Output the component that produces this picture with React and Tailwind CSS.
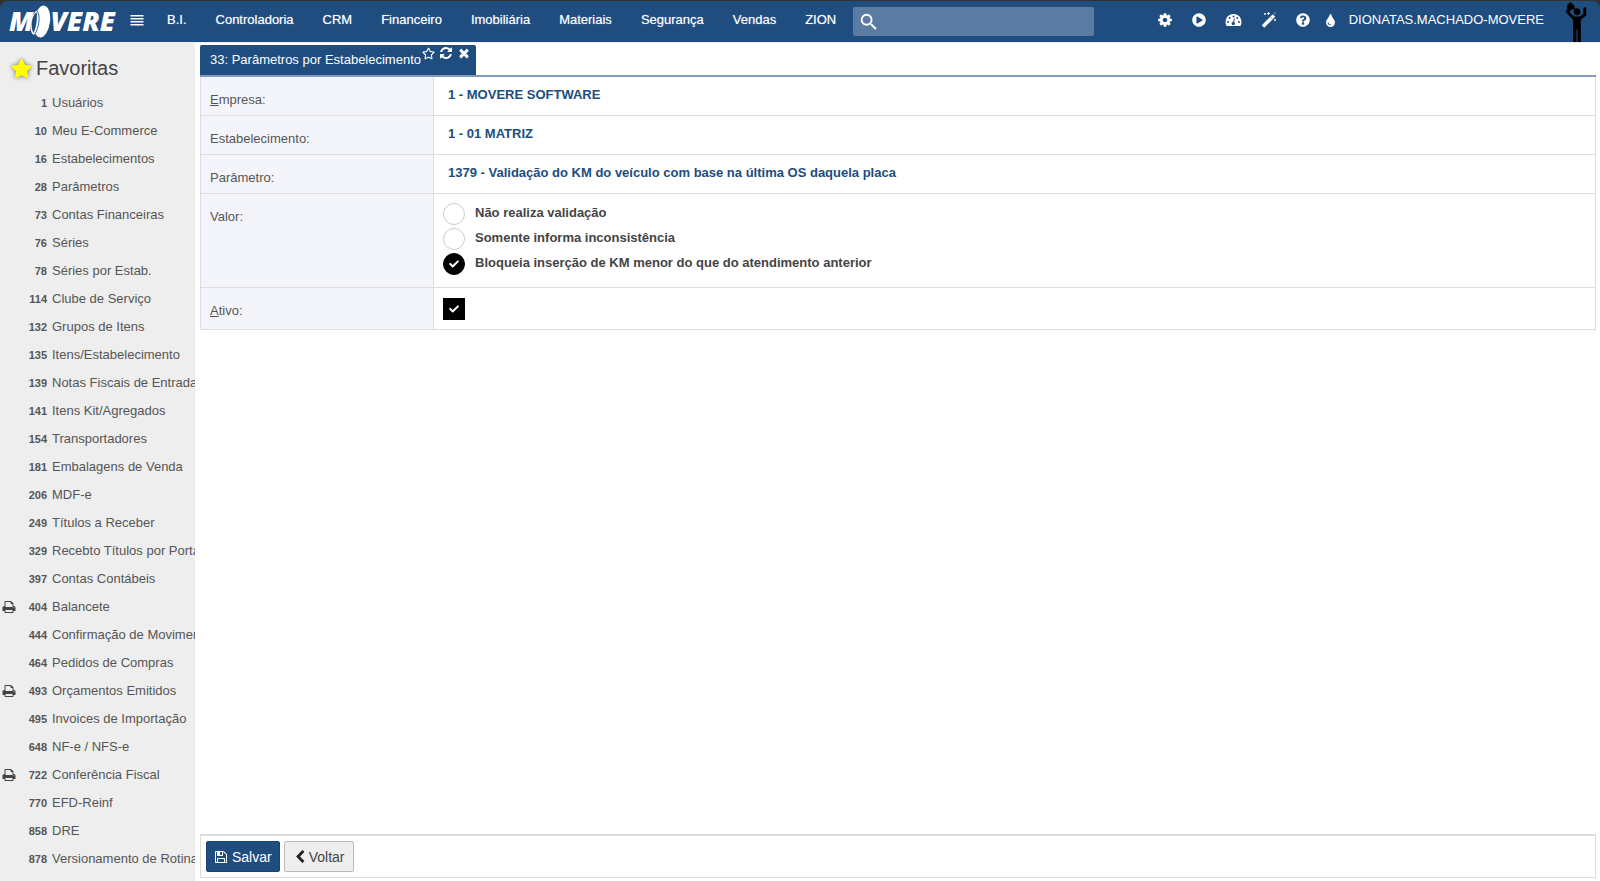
import React from 'react';
import { FaPlayCircle, FaQuestionCircle, FaTint, FaRegStar, FaStar, FaCheck } from 'react-icons/fa';
import { MdSearch } from 'react-icons/md';

const MENUS = ['B.I.', 'Controladoria', 'CRM', 'Financeiro', 'Imobiliária', 'Materiais', 'Segurança', 'Vendas', 'ZION'];

const FAVORITES = [
  { id: 1, name: 'Usuários' },
  { id: 10, name: 'Meu E-Commerce' },
  { id: 16, name: 'Estabelecimentos' },
  { id: 28, name: 'Parâmetros' },
  { id: 73, name: 'Contas Financeiras' },
  { id: 76, name: 'Séries' },
  { id: 78, name: 'Séries por Estab.' },
  { id: 114, name: 'Clube de Serviço' },
  { id: 132, name: 'Grupos de Itens' },
  { id: 135, name: 'Itens/Estabelecimento' },
  { id: 139, name: 'Notas Fiscais de Entrada' },
  { id: 141, name: 'Itens Kit/Agregados' },
  { id: 154, name: 'Transportadores' },
  { id: 181, name: 'Embalagens de Venda' },
  { id: 206, name: 'MDF-e' },
  { id: 249, name: 'Títulos a Receber' },
  { id: 329, name: 'Recebto Títulos por Portador' },
  { id: 397, name: 'Contas Contábeis' },
  { id: 404, name: 'Balancete', print: true },
  { id: 444, name: 'Confirmação de Movimento' },
  { id: 464, name: 'Pedidos de Compras' },
  { id: 493, name: 'Orçamentos Emitidos', print: true },
  { id: 495, name: 'Invoices de Importação' },
  { id: 648, name: 'NF-e / NFS-e' },
  { id: 722, name: 'Conferência Fiscal', print: true },
  { id: 770, name: 'EFD-Reinf' },
  { id: 858, name: 'DRE' },
  { id: 878, name: 'Versionamento de Rotinas' },
];

const OPTIONS = [
  'Não realiza validação',
  'Somente informa inconsistência',
  'Bloqueia inserção de KM menor do que do atendimento anterior',
];

const ICONS = {
  bars: 'M64 256h1664v192H64zM64 640h1664v192H64zM64 1024h1664v192H64zM64 1408h1664v192H64z',
  print: 'M448 1536h896v-256h-896v256zm0-640h896v-384h-160q-40 0-68-28t-28-68v-160h-640v640zm1152 64q0-26-19-45t-45-19-45 19-19 45 19 45 45 19 45-19 19-45zm128 0v416q0 13-9.500 22.500t-22.500 9.500h-224v160q0 40-28 68t-68 28h-960q-40 0-68-28t-28-68v-160h-224q-13 0-22.500-9.500t-9.500-22.500v-416q0-79 56.500-135.500t135.500-56.500h64v-544q0-40 28-68t68-28h672q40 0 88 20t76 48l152 152q28 28 48 76t20 88v256h64q79 0 135.500 56.500t56.500 135.500z',
  refresh: 'M1639 1056q0 5-1 7-64 268-268 434.500t-478 166.500q-146 0-282.500-55t-243.500-157l-129 129q-19 19-45 19t-45-19-19-45v-448q0-26 19-45t45-19h448q26 0 45 19t19 45-19 45l-137 137q71 66 161 102t187 36q134 0 250-65t186-179q11-17 53-117 8-23 30-23h192q13 0 22.500 9.500t9.500 22.500zm25-800v448q0 26-19 45t-45 19h-448q-26 0-45-19t-19-45 19-45l138-138q-148-137-349-137-134 0-250 65t-186 179q-11 17-53 117-8 23-30 23h-199q-13 0-22.500-9.500t-9.500-22.500v-7q65-268 270-434.500t480-166.500q146 0 284 55.500t245 156.500l130-129q19-19 45-19t45 19 19 45z',
  times: 'M1490 1322q0 40-28 68l-136 136q-28 28-68 28t-68-28l-294-294-294 294q-28 28-68 28t-68-28l-136-136q-28-28-28-68t28-68l294-294-294-294q-28-28-28-68t28-68l136-136q28-28 68-28t68 28l294 294 294-294q28-28 68-28t68 28l136 136q28 28 28 68t-28 68l-294 294 294 294q28 28 28 68z',
  left: 'M1427 301l-531 531 531 531q19 19 19 45t-19 45l-166 166q-19 19-45 19t-45-19l-742-742q-19-19-19-45t19-45l742-742q19-19 45-19t45 19l166 166q19 19 19 45t-19 45z',
  save: 'M512 1536h768v-384h-768v384zm896 0h128v-896q0-14-10-38.500t-20-34.500l-281-281q-10-10-34-20t-39-10v416q0 40-28 68t-68 28h-576q-40 0-68-28t-28-68v-416h-128v1280h128v-416q0-40 28-68t68-28h832q40 0 68 28t28 68v416zm-384-928v-320q0-13-9.500-22.500t-22.500-9.500h-192q-13 0-22.500 9.500t-9.500 22.500v320q0 13 9.500 22.500t22.500 9.500h192q13 0 22.500-9.500t9.500-22.500zm640 32v928q0 40-28 68t-68 28h-1344q-40 0-68-28t-28-68v-1344q0-40 28-68t68-28h928q40 0 88 20t76 48l280 280q28 28 48 76t20 88z',
  cog: 'M1152 896q0-106-75-181t-181-75-181 75-75 181 75 181 181 75 181-75 75-181zm512-109v222q0 12-8 23t-20 13l-185 28q-19 54-39 91 35 50 107 138 10 12 10 25t-9 23q-27 37-99 108t-94 71q-12 0-26-9l-138-108q-44 23-91 38-16 136-29 186-7 28-36 28h-222q-14 0-24.500-8.500t-11.500-21.500l-28-184q-49-16-90-37l-141 107q-10 9-25 9-14 0-25-11-126-114-165-168-7-10-7-23 0-12 8-23 15-21 51-66.500t54-70.500q-27-50-41-99l-183-27q-13-2-21-12.500t-8-23.500v-222q0-12 8-23t19-13l186-28q14-46 39-92-40-57-107-138-10-12-10-24 0-10 9-23 26-36 98.500-107.500t94.500-71.500q13 0 26 10l138 107q44-23 91-38 16-136 29-186 7-28 36-28h222q14 0 24.500 8.500t11.500 21.500l28 184q49 16 90 37l142-107q9-9 24-9 13 0 25 10 129 119 165 170 7 8 7 22 0 12-8 23-15 21-51 66.500t-54 70.500q26 50 41 98l183 28q13 2 21 12.500t8 23.500z',
};

const Icon = ({ name, className }) => (
  <svg viewBox="0 0 1792 1792" fill="currentColor" className={className}><path d={ICONS[name]} /></svg>
);

const Gauge = () => (
  <svg viewBox="0 0 17 14" className="h-[14px] w-[17px]">
    <path d="M8.500 1A8 8 0 0 0 1.600 13h13.800A8 8 0 0 0 8.500 1z" fill="#fff" />
    <g fill="#204d80">
      <circle cx="3" cy="9" r="1" />
      <circle cx="4.600" cy="5" r="1" />
      <circle cx="8.500" cy="3.400" r="1" />
      <circle cx="12.400" cy="5" r="1" />
      <circle cx="14" cy="9" r="1" />
      <circle cx="8.300" cy="10.500" r="1.700" />
    </g>
    <path d="M8.300 10.500 9.500 5.500" stroke="#204d80" strokeWidth="1" />
  </svg>
);

const Wand = () => (
  <svg viewBox="0 0 16 16" className="size-4" fill="none" stroke="#fff">
    <path d="M2 14.500 13 3.500" strokeWidth="3.400" />
    <path d="M9.700 5.300l1.500 1.500" stroke="#204d80" strokeWidth="0.800" />
    <path d="M4 1v2M3 2h2M7.500 0v3M6 1.500h3M14 7v2M13 8h2M14 .5v1" strokeWidth="0.900" />
  </svg>
);

const Logo = () => (
  <a
    href="#"
    aria-label="Movere"
    className="relative flex h-9 w-[106px] shrink-0 items-center justify-between pb-[2px] text-[27px] font-extrabold italic leading-none text-white font-['Open_Sans',sans-serif]"
  >
    <span>M</span>
    <svg viewBox="0 0 22 34" className="absolute left-5 top-px h-[34px] w-[22px]">
      <ellipse cx="13" cy="16.500" rx="8" ry="16" fill="#fff" transform="rotate(8 13 16.500)" />
      <ellipse cx="7" cy="17.500" rx="5" ry="12.500" fill="#fff" transform="rotate(10 7 17.500)" />
      <path d="M8 5.500c3.500 5 2.500 17-2.500 24" fill="none" stroke="#204d80" strokeWidth="0.900" />
      <path d="M7.500 7C2.500 11 1 22 4.500 28 7.500 22 8.500 12 7.500 7z" fill="#204d80" />
    </svg>
    <span>VERE</span>
  </a>
);

const Mascot = () => (
  <svg viewBox="0 0 24 42" className="h-[41px] w-6" fill="none" stroke="#000" strokeLinecap="round">
    <circle cx="13" cy="11" r="3.500" fill="#000" stroke="none" />
    <path d="M9 17 4 12M17 17l4-3V8" strokeWidth="3" />
    <path d="M9 16h8v26h-3.500V29h-1v13H9z" fill="#000" stroke="none" />
    <path d="m3 4 3-3 4 3 1 4-4 1-2 3-4-1 2-2z" fill="#000" stroke="none" />
  </svg>
);

const Header = () => (
  <div className="bg-[#333]">
    <header className="mt-px flex h-[42px] items-center rounded-t-lg border-b border-[#eee] bg-[#204d80] pl-[9px] pr-3 text-[13px] text-white">
      <Logo />
      <div className="flex flex-1 items-center pb-[3px]">
        <button aria-label="Menu" className="ml-[15px]"><Icon name="bars" className="size-[14px]" /></button>
        <nav className="ml-[23px] flex gap-[29px] whitespace-nowrap">
          {MENUS.map((m) => <a key={m} href="#" className="text-shadow-[0_0_1px_#ffffff80]">{m}</a>)}
        </nav>
      </div>
      <label className="mr-[63px] flex h-[29px] w-[241px] items-center rounded-xs bg-[#5b7ca2] pl-[5px]">
        <MdSearch className="h-6 w-6" />
        <input aria-label="Pesquisar" className="w-full min-w-0 outline-none" />
      </label>
      <div className="flex items-center pb-[3px]">
        <div className="flex items-center gap-[19px]">
          <button aria-label="Configurações"><Icon name="cog" className="size-4" /></button>
          <button aria-label="Executar"><FaPlayCircle className="size-[14px]" /></button>
          <button aria-label="Painel"><Gauge /></button>
          <button aria-label="Assistente"><Wand /></button>
          <button aria-label="Ajuda"><FaQuestionCircle className="size-[14px]" /></button>
        </div>
        <button aria-label="Tema" className="ml-[14px]"><FaTint className="size-[13px]" /></button>
        <a href="#" className="ml-3">DIONATAS.MACHADO-MOVERE</a>
      </div>
      <div className="ml-5"><Mascot /></div>
    </header>
  </div>
);

const Sidebar = () => (
  <aside className="w-[195px] shrink-0 overflow-hidden bg-[#eee] text-[#555]">
    <h2 className="mb-[6px] flex h-10 items-center gap-1 pl-[11px] pt-[10px] text-xl text-[#444]">
      <FaStar className="size-[21px] text-[#ff0] drop-shadow-[0_0_2px_#666]" />
      Favoritas
    </h2>
    <ul>
      {FAVORITES.map((f) => (
        <li key={f.id}>
          <a href="#" className="flex h-7 items-center whitespace-nowrap text-[13px]">
            <span className="w-4 shrink-0 pl-[2px]">{f.print && <Icon name="print" className="size-[14px] text-[#444]" />}</span>
            <b className="mr-[5px] w-[31px] shrink-0 text-right text-[11px]">{f.id}</b>
            {f.name}
          </a>
        </li>
      ))}
    </ul>
  </aside>
);

const Row = ({ label, children }) => (
  <tr className="border-b border-[#ddd] align-top">
    <th scope="row" className="w-[233px] border-x border-[#ddd] bg-[#f4f5fa] px-[9px] pb-[5px] pt-[13px] text-left font-normal">{label}</th>
    <td className="border-r border-[#ddd]">{children}</td>
  </tr>
);

const Value = ({ children }) => <div className="px-[14px] py-2 font-bold text-[#204d80]">{children}</div>;

const App = () => (
  <div className="flex min-h-screen flex-col bg-white font-['Liberation_Sans',Arial,sans-serif] text-[13px] leading-5 text-[#555]">
    <Header />
    <div className="flex flex-1">
      <Sidebar />
      <main className="flex min-w-0 flex-1 flex-col pb-[3px] pl-[5px] pr-1 pt-[2px]">
        <div className="flex border-b-2 border-[#8099bd]">
          <div className="flex h-[30px] items-start gap-px rounded-t-xs bg-[#204d80] pl-[10px] pr-[5px] text-white">
            <span className="pt-[5px]">33: Parâmetros por Estabelecimento</span>
            <div className="flex items-center gap-1 pt-px">
              <button aria-label="Favoritar"><FaRegStar className="size-[13px]" /></button>
              <button aria-label="Atualizar"><Icon name="refresh" className="size-[14px]" /></button>
              <button aria-label="Fechar"><Icon name="times" className="size-[14px]" /></button>
            </div>
          </div>
        </div>
        <table className="w-full border-collapse">
          <tbody>
            <Row label={<><u>E</u>mpresa:</>}><Value>1 - MOVERE SOFTWARE</Value></Row>
            <Row label="Estabelecimento:"><Value>1 - 01 MATRIZ</Value></Row>
            <Row label="Parâmetro:"><Value>1379 - Validação do KM do veículo com base na última OS daquela placa</Value></Row>
            <Row label="Valor:">
              <div className="flex flex-col gap-[3px] pb-3 pl-[9px] pt-[9px] font-bold text-[#444]">
                {OPTIONS.map((o, i) => (
                  <label key={o} className="flex items-start gap-[10px]">
                    <span className="relative flex">
                      <input type="radio" name="valor" defaultChecked={i === 2} className="peer size-[22px] appearance-none rounded-full border border-[#ccc] checked:border-black checked:bg-black" />
                      <FaCheck className="absolute inset-[6px] hidden size-[10px] text-white peer-checked:block" />
                    </span>
                    {o}
                  </label>
                ))}
              </div>
            </Row>
            <Row label={<label htmlFor="ativo"><u>A</u>tivo:</label>}>
              <div className="relative flex pb-[9px] pl-[9px] pt-[10px]">
                <input id="ativo" type="checkbox" defaultChecked className="peer size-[22px] appearance-none border border-[#ccc] checked:border-black checked:bg-black" />
                <FaCheck className="absolute left-[15px] top-4 hidden size-[10px] text-white peer-checked:block" />
              </div>
            </Row>
          </tbody>
        </table>
        <footer className="mt-auto flex h-11 items-center gap-1 border border-t-2 border-[#ddd] pl-[5px] text-sm">
          <button className="flex h-[31px] items-center gap-1 rounded-xs border border-[#1a4372] bg-[#204d80] px-[7px] text-white"><Icon name="save" className="size-[14px]" />Salvar</button>
          <button className="flex h-[31px] items-center gap-[2px] rounded-xs border border-[#bbb] bg-[#eee] px-2 text-[#444]"><Icon name="left" className="size-[14px] text-[#222]" />Voltar</button>
        </footer>
      </main>
    </div>
  </div>
);

export default App;
